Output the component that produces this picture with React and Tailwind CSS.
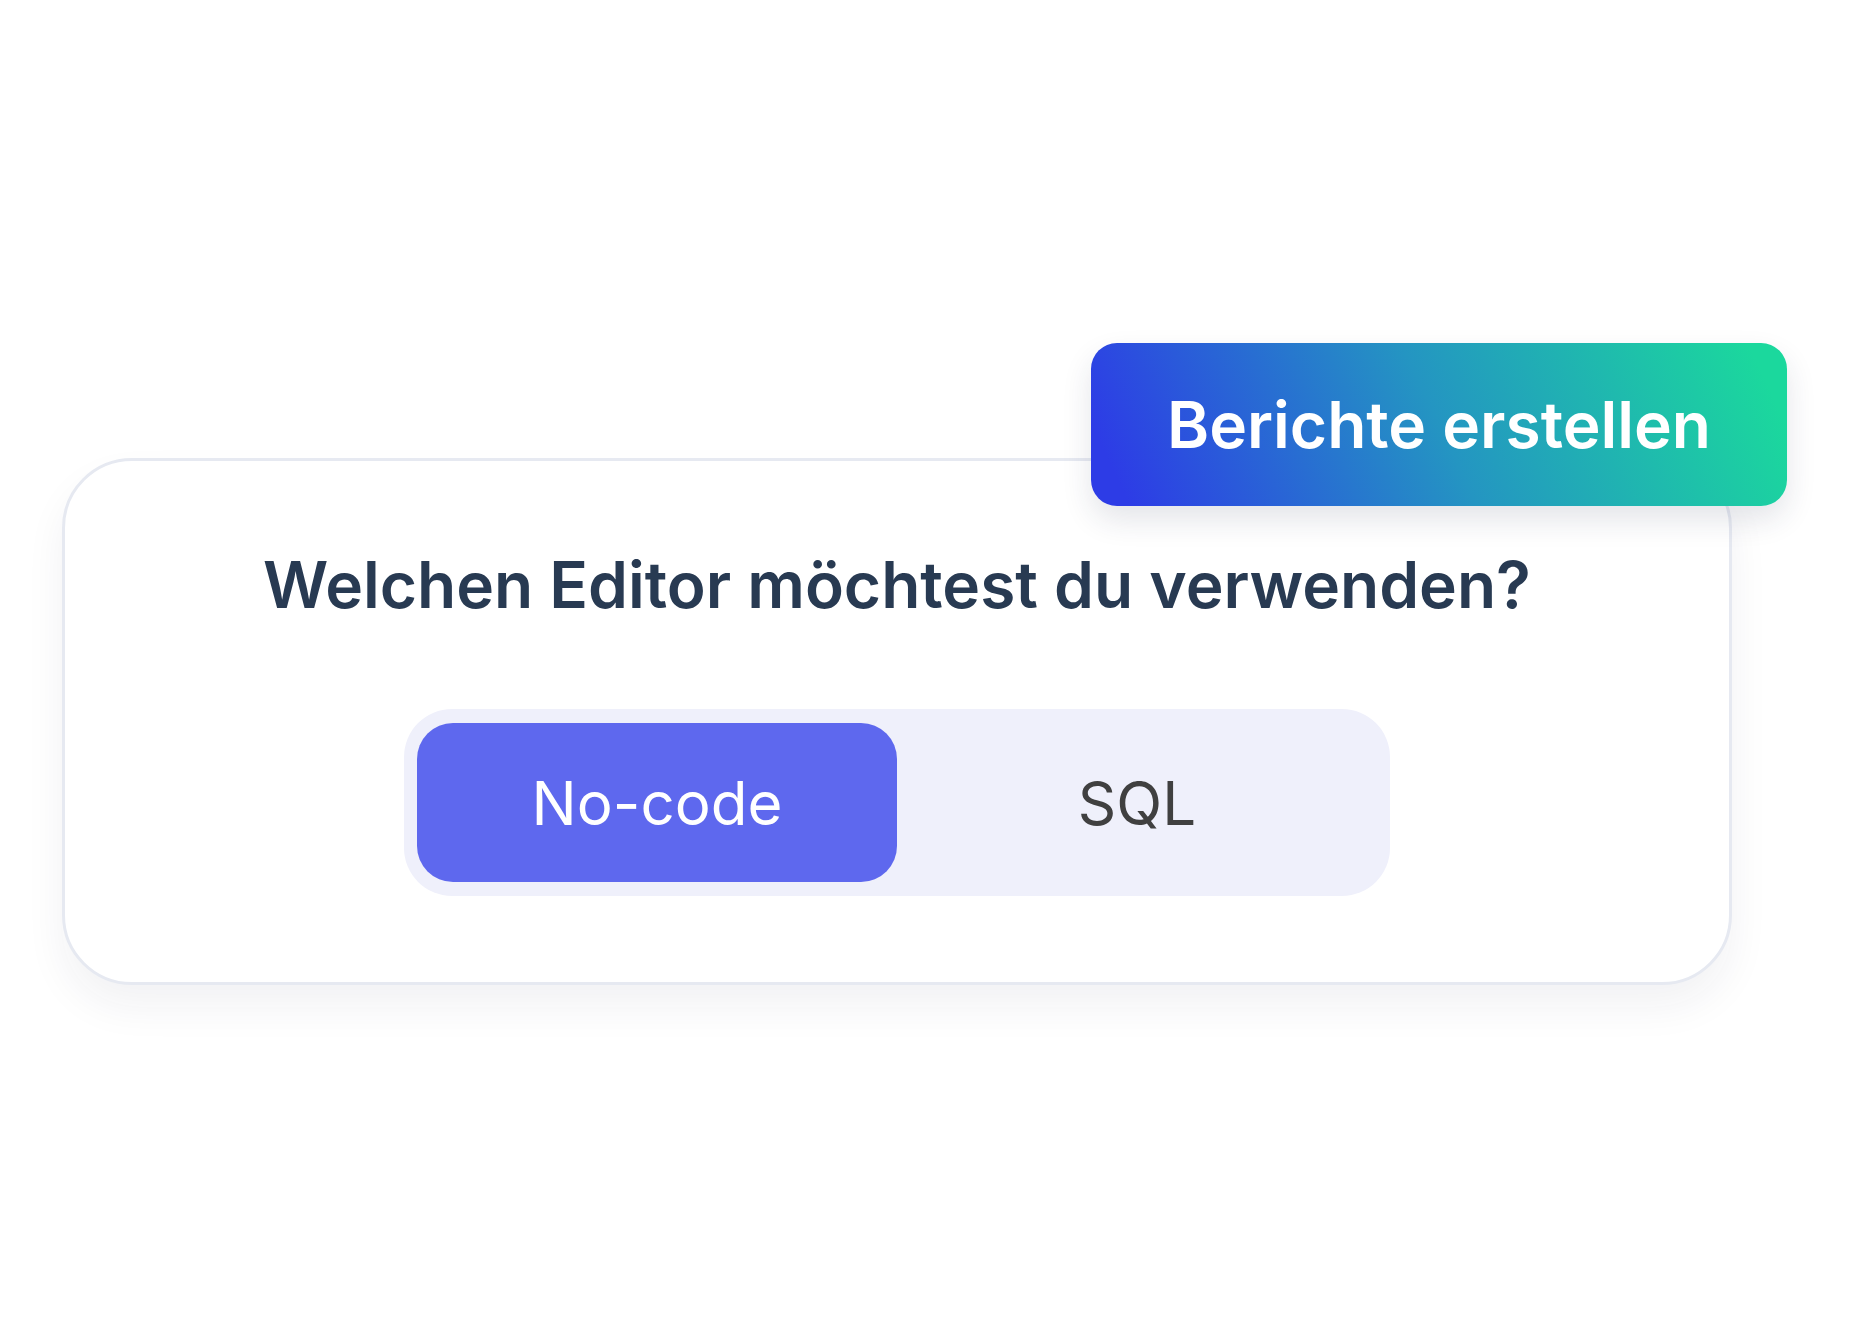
import { useState } from "react";

function App() {
  const [mode, setMode] = useState("nocode");

  return (
    <div
      className="bg-white w-[1850px] h-[1330px] overflow-hidden pt-[458px] pl-[62px]"
      style={{ fontFamily: "Inter, 'Noto Sans', sans-serif" }}
    >
      <div className="relative w-[1670px] h-[527px] bg-white rounded-[70px] border-[3px] border-[#e6e9f1] shadow-[0_22px_40px_rgba(30,40,70,0.06)] pt-[86px]">
        <h1 className="text-center text-[64px] leading-[76px] font-semibold text-[#283a52]">
          Welchen Editor möchtest du verwenden?
        </h1>

        <div className="mx-auto mt-[86px] w-[986px] h-[187px] bg-[#eff0fb] rounded-[48px] px-[13px] py-[14px] flex">
          <button
            onClick={() => setMode("nocode")}
            className={`w-[480px] h-full rounded-[36px] text-[60px] font-normal ${mode === "nocode" ? "bg-[#5e68ee] text-white" : "text-[#404040]"}`}
          >
            No-code
          </button>
          <button
            onClick={() => setMode("sql")}
            className={`w-[480px] h-full rounded-[36px] text-[60px] font-normal ${mode === "sql" ? "bg-[#5e68ee] text-white" : "text-[#404040]"}`}
          >
            SQL
          </button>
        </div>

        <div className="absolute left-[1026px] top-[-118px] w-[696px] h-[163px] rounded-[26px] bg-linear-[65deg] from-[#2d3ce6] from-5% via-[#2495c2] to-[#1bd89d] to-95% shadow-[0_14px_30px_rgba(30,40,70,0.12)] flex items-center justify-center">
          <span className="text-white text-[64px] font-semibold">
            Berichte erstellen
          </span>
        </div>
      </div>
    </div>
  );
}

export default App;
